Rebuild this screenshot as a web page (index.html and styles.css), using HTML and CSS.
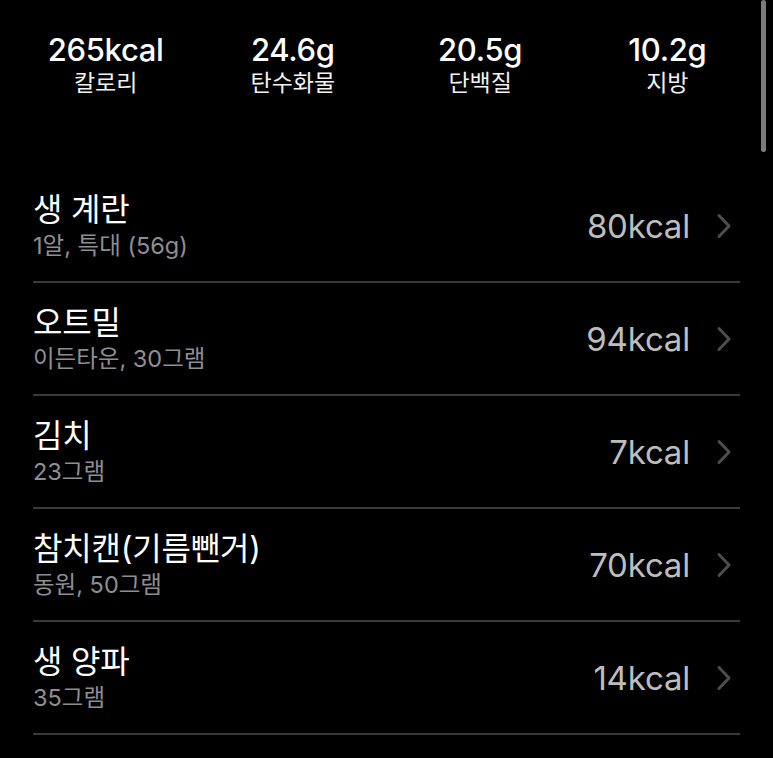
FILE: index.html
```html
<!DOCTYPE html>
<html lang="ko">
<head>
<meta charset="utf-8">
<link rel="stylesheet" href="styles.css">
</head>
<body>
<div class="screen">
  <div class="stats">
    <div class="stat"><div class="stat-value">265kcal</div><div class="stat-label">칼로리</div></div>
    <div class="stat"><div class="stat-value">24.6g</div><div class="stat-label">탄수화물</div></div>
    <div class="stat"><div class="stat-value">20.5g</div><div class="stat-label">단백질</div></div>
    <div class="stat"><div class="stat-value">10.2g</div><div class="stat-label">지방</div></div>
  </div>
  <ul class="foods">
    <li class="food">
      <div class="food-text"><div class="food-name">생 계란</div><div class="food-desc">1알, 특대 (56g)</div></div>
      <div class="food-kcal">80kcal</div>
      <svg class="chev" viewBox="0 0 16 26" width="16" height="26"><path d="M3 2.5 L13 13 L3 23.5" fill="none" stroke="#4d4d4f" stroke-width="3" stroke-linecap="round" stroke-linejoin="round"/></svg>
    </li>
    <li class="food">
      <div class="food-text"><div class="food-name">오트밀</div><div class="food-desc">이든타운, 30그램</div></div>
      <div class="food-kcal">94kcal</div>
      <svg class="chev" viewBox="0 0 16 26" width="16" height="26"><path d="M3 2.5 L13 13 L3 23.5" fill="none" stroke="#4d4d4f" stroke-width="3" stroke-linecap="round" stroke-linejoin="round"/></svg>
    </li>
    <li class="food">
      <div class="food-text"><div class="food-name">김치</div><div class="food-desc">23그램</div></div>
      <div class="food-kcal">7kcal</div>
      <svg class="chev" viewBox="0 0 16 26" width="16" height="26"><path d="M3 2.5 L13 13 L3 23.5" fill="none" stroke="#4d4d4f" stroke-width="3" stroke-linecap="round" stroke-linejoin="round"/></svg>
    </li>
    <li class="food">
      <div class="food-text"><div class="food-name">참치캔(기름뺀거)</div><div class="food-desc">동원, 50그램</div></div>
      <div class="food-kcal">70kcal</div>
      <svg class="chev" viewBox="0 0 16 26" width="16" height="26"><path d="M3 2.5 L13 13 L3 23.5" fill="none" stroke="#4d4d4f" stroke-width="3" stroke-linecap="round" stroke-linejoin="round"/></svg>
    </li>
    <li class="food">
      <div class="food-text"><div class="food-name">생 양파</div><div class="food-desc">35그램</div></div>
      <div class="food-kcal">14kcal</div>
      <svg class="chev" viewBox="0 0 16 26" width="16" height="26"><path d="M3 2.5 L13 13 L3 23.5" fill="none" stroke="#4d4d4f" stroke-width="3" stroke-linecap="round" stroke-linejoin="round"/></svg>
    </li>
  </ul>
  <div class="scrollbar"></div>
</div>
</body>
</html>
```
FILE: styles.css
```css
html, body {
  margin: 0;
  padding: 0;
  background: #000;
}
body {
  font-family: Inter, "Noto Sans CJK KR", sans-serif;
  color: #fff;
  overflow: hidden;
}
.screen {
  width: 773px;
  height: 758px;
  position: relative;
}
.stats {
  display: grid;
  grid-template-columns: repeat(4, 1fr);
  padding: 34px 12px 0;
}
.stat {
  display: flex;
  flex-direction: column;
  align-items: center;
}
.stat-value {
  font-size: 31px;
  font-weight: 500;
  line-height: 32px;
  letter-spacing: -0.3px;
}
.stat-label {
  font-size: 23px;
  line-height: 28px;
  margin-top: 3px;
  color: #f2f2f2;
}
.foods {
  list-style: none;
  margin: 73px 0 0;
  padding: 0 33px;
}
.food {
  height: 111px;
  border-bottom: 2px solid #3a3a3c;
  display: flex;
  align-items: center;
  padding-right: 8px;
}
.food-text {
  flex: 1;
  display: flex;
  flex-direction: column;
}
.food-name {
  font-size: 32px;
  line-height: 40px;
  color: #fff;
  letter-spacing: -0.2px;
}
.food-desc {
  font-size: 23.5px;
  line-height: 32px;
  color: #8e8e93;
}
.food-kcal {
  font-size: 33px;
  line-height: 38px;
  color: #bdbdbf;
  letter-spacing: -0.2px;
  margin-right: 26px;
}
.chev {
  display: block;
}
.scrollbar {
  position: absolute;
  right: 7px;
  top: 0;
  width: 5px;
  height: 152px;
  background: #7c7c7c;
  border-radius: 3px;
}
```
